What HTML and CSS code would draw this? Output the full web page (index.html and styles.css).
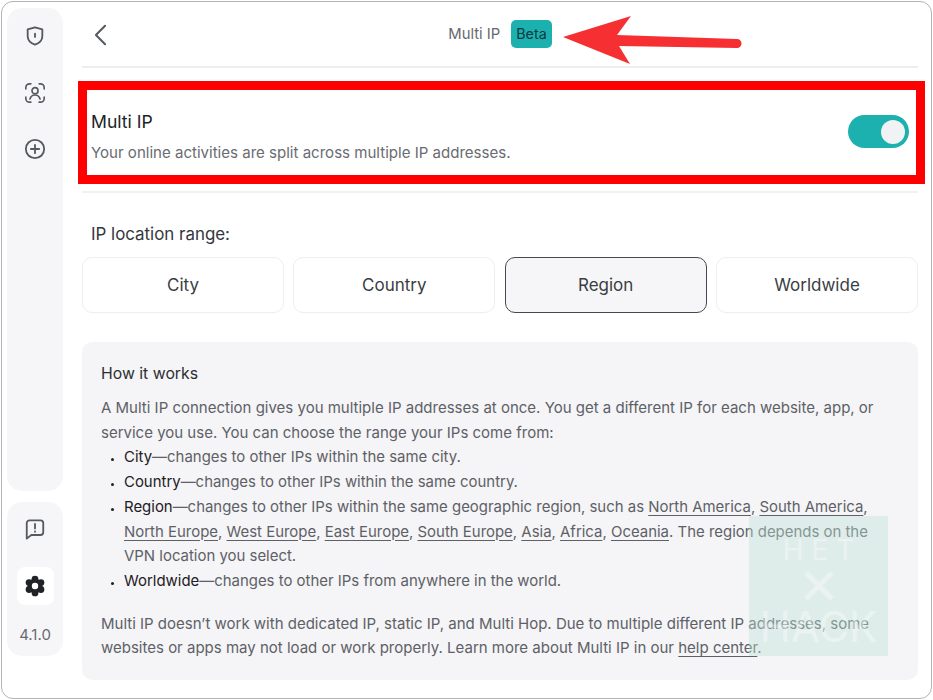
FILE: index.html
```html
<!DOCTYPE html>
<html lang="en">
<head>
  <meta charset="UTF-8">
  <title>Multi IP</title>
  <link rel="stylesheet" href="styles.css">
</head>
<body>
  <div class="window">
    <aside class="sidebar">
      <div class="side-panel side-top">
        <svg class="side-icon" viewBox="0 0 24 24" fill="none" stroke="#555a60" stroke-width="2" stroke-linejoin="round" stroke-linecap="round">
          <path d="M12 2.500l8 2.400v7.200c0 4.600-3.400 7.800-8 9.400-4.600-1.600-8-4.800-8-9.400V4.900z"/>
          <path d="M12 9.500v3.500"/>
        </svg>
        <svg class="side-icon" viewBox="0 0 24 24" fill="none" stroke="#555a60" stroke-width="1.800" stroke-linecap="round">
          <path d="M2 7.500V6a4 4 0 0 1 4-4h1.500M16.500 2H18a4 4 0 0 1 4 4v1.500M22 16.500V18a4 4 0 0 1-4 4h-1.500M7.500 22H6a4 4 0 0 1-4-4v-1.500"/>
          <circle cx="12" cy="9.500" r="3.300"/>
          <path d="M6.500 18.500c.8-2.800 3-4.300 5.500-4.300s4.700 1.500 5.500 4.300"/>
        </svg>
        <svg class="side-icon" viewBox="0 0 24 24" fill="none" stroke="#555a60" stroke-width="2" stroke-linecap="round">
          <circle cx="12" cy="12" r="10"/>
          <path d="M12 7.500v9M7.500 12h9"/>
        </svg>
      </div>
      <div class="side-panel side-bottom">
        <svg class="side-icon" viewBox="0 0 24 24" fill="none" stroke="#555a60" stroke-width="2" stroke-linejoin="round" stroke-linecap="round">
          <path d="M3 5.500a3 3 0 0 1 3-3h12a3 3 0 0 1 3 3v10a3 3 0 0 1-3 3H8l-5 4z"/>
          <path d="M12 6.500v5M12 14.700v.3"/>
        </svg>
        <div class="settings-tile">
          <svg class="gear" viewBox="0 0 24 24">
            <g fill="#1f2327">
              <circle cx="12" cy="12" r="8"/>
              <circle cx="12" cy="4.500" r="3.700"/>
              <circle cx="12" cy="19.500" r="3.700"/>
              <circle cx="5.500" cy="8.200" r="3.700"/>
              <circle cx="18.500" cy="8.200" r="3.700"/>
              <circle cx="5.500" cy="15.800" r="3.700"/>
              <circle cx="18.500" cy="15.800" r="3.700"/>
            </g>
            <circle cx="12" cy="12" r="3.500" fill="#fff"/>
          </svg>
        </div>
        <span class="version">4.1.0</span>
      </div>
    </aside>

    <main class="main">
      <header class="topbar">
        <svg class="back" viewBox="0 0 14 24" fill="none" stroke="#555a60" stroke-width="2.200" stroke-linecap="round" stroke-linejoin="round">
          <path d="M12 2L2 12l10 10"/>
        </svg>
        <div class="title">
          <span>Multi IP</span>
          <span class="beta">Beta</span>
        </div>
      </header>

      <section class="toggle-row">
        <div>
          <h2 class="toggle-title">Multi IP</h2>
          <p class="toggle-desc">Your online activities are split across multiple IP addresses.</p>
        </div>
        <div class="switch"><span class="knob"></span></div>
      </section>

      <div class="range">
        <h3 class="range-label">IP location range:</h3>
        <div class="range-options">
          <div class="option">City</div>
          <div class="option">Country</div>
          <div class="option selected">Region</div>
          <div class="option">Worldwide</div>
        </div>
      </div>

      <section class="info">
        <h3 class="info-title">How it works</h3>
        <p>A Multi IP connection gives you multiple IP addresses at once. You get a different IP for each website, app, or service you use. You can choose the range your IPs come from:</p>
        <ul>
          <li><b>City</b>—changes to other IPs within the same city.</li>
          <li><b>Country</b>—changes to other IPs within the same country.</li>
          <li><b>Region</b>—changes to other IPs within the same geographic region, such as <a>North America</a>, <a>South America</a>, <a>North Europe</a>, <a>West Europe</a>, <a>East Europe</a>, <a>South Europe</a>, <a>Asia</a>, <a>Africa</a>, <a>Oceania</a>. The region depends on the VPN location you select.</li>
          <li><b>Worldwide</b>—changes to other IPs from anywhere in the world.</li>
        </ul>
        <p class="note">Multi IP doesn’t work with dedicated IP, static IP, and Multi Hop. Due to multiple different IP addresses, some websites or apps may not load or work properly. Learn more about Multi IP in our <a>help center</a>.</p>
      </section>
    </main>

    <!-- annotations on top of the screenshot -->
    <svg class="arrow" viewBox="0 0 180 50">
      <path fill="#f62f33" d="M1 22L69 1 55 20 175 24a4 4 0 0 1 0 9L57 31 68 49z"/>
    </svg>
    <div class="watermark">
      <span class="wm-top">НЕТ</span>
      <span class="wm-cross">✕</span>
      <span class="wm-bottom">HACK</span>
    </div>
  </div>
</body>
</html>
```

FILE: styles.css
```css
* {
  box-sizing: border-box;
}

html, body {
  margin: 0;
  height: 100%;
  background: #fff;
}

body {
  font-family: Inter, "Liberation Sans", sans-serif;
  color: #5d6166;
}

.window {
  position: relative;
  width: 931px;
  height: 698px;
  margin: 1px 0 0 1px;
  border: 1px solid #b4b4b6;
  border-radius: 12px;
  display: flex;
  background: #fff;
  overflow: hidden;
}

.sidebar {
  width: 80px;
  flex: none;
  padding: 6px 19px 42px 5px;
  display: flex;
  flex-direction: column;
  gap: 11px;
}

.side-panel {
  background: #f6f6f8;
  border-radius: 15px;
  display: flex;
  flex-direction: column;
  align-items: center;
}

.side-top {
  flex: 1;
  padding-top: 17px;
  gap: 34.500px;
}

.side-bottom {
  height: 154px;
  padding-top: 16px;
}

.side-icon {
  width: 22px;
  height: 22px;
}

.settings-tile {
  width: 37px;
  height: 38px;
  margin-top: 27px;
  background: #fff;
  border-radius: 8px;
  display: flex;
  align-items: center;
  justify-content: center;
}

.gear {
  width: 22px;
  height: 22px;
}

.version {
  margin-top: 20px;
  font-size: 15px;
  line-height: 20px;
  color: #666a6f;
}

.main {
  width: 836px;
  flex: none;
}

.topbar {
  position: relative;
  height: 66px;
  border-bottom: 2px solid #eeeef1;
  display: flex;
  align-items: center;
  justify-content: center;
}

.back {
  position: absolute;
  left: 12px;
  top: 22px;
  width: 13px;
  height: 22px;
}

.title {
  display: flex;
  align-items: center;
  gap: 11px;
  font-size: 14.800px;
  color: #66696e;
}

.beta {
  background: #1cb1ae;
  color: #0f3a42;
  font-size: 14.300px;
  line-height: 28px;
  padding: 0 5px;
  border-radius: 5px;
}

.toggle-row {
  margin: 13px -7px 0 -4px;
  height: 103px;
  border: 9px solid #fe0000;
  padding: 7px 7px 0 4px;
  display: flex;
  align-items: center;
  justify-content: space-between;
}

.toggle-title {
  margin: 0 0 9px;
  font-size: 17.600px;
  font-weight: 400;
  line-height: 24px;
  color: #202327;
}

.toggle-desc {
  margin: 0;
  font-size: 15.050px;
  line-height: 20px;
  color: #696c71;
}

.switch {
  width: 61px;
  height: 33px;
  margin-top: -9px;
  border-radius: 17px;
  background: #1cb1ae;
  display: flex;
  align-items: center;
  justify-content: flex-end;
  padding-right: 4px;
}

.knob {
  width: 24px;
  height: 24px;
  border-radius: 50%;
  background: #f1f2f3;
}

.range {
  margin-top: 7px;
  border-top: 2px solid #f1f1f3;
}

.range-label {
  margin: 29px 0 11px 9px;
  font-size: 16.900px;
  font-weight: 400;
  line-height: 24px;
  color: #34373b;
}

.range-options {
  display: grid;
  grid-template-columns: repeat(4, 1fr);
  gap: 9.300px;
}

.option {
  height: 56px;
  border: 1px solid #eeeef1;
  border-radius: 10px;
  display: flex;
  align-items: center;
  justify-content: center;
  font-size: 17px;
  color: #3a3d41;
}

.option.selected {
  background: #f6f6f8;
  border: 1.500px solid #45494e;
}

.info {
  margin-top: 29px;
  height: 338px;
  padding: 20px 19px 0;
  background: #f5f4f7;
  border-radius: 10px;
  font-size: 15px;
  line-height: 24.700px;
}

.info-title {
  margin: 0 0 10px;
  font-size: 15.800px;
  font-weight: 400;
  line-height: 24px;
  color: #2c2f33;
}

.info p {
  margin: 0;
}

.info ul {
  margin: 0;
  padding-left: 23px;
  font-size: 14.950px;
}

.info li::marker {
  font-size: 10px;
  color: #222;
}

.info b {
  font-weight: 400;
  color: #1d2024;
}

.info a {
  text-decoration: underline;
  text-underline-offset: 3px;
}

.info .note {
  margin-top: 18px;
}

.arrow {
  position: absolute;
  left: 560px;
  top: 13px;
  width: 180px;
  height: 50px;
}

.watermark {
  position: absolute;
  left: 747px;
  top: 514px;
  width: 139px;
  height: 140px;
  background: rgba(190, 228, 214, 0.4);
  display: flex;
  flex-direction: column;
  align-items: center;
  padding-top: 20px;
  color: rgba(255, 255, 255, 0.35);
}

.wm-top {
  font-size: 28px;
  line-height: 28px;
  letter-spacing: 8px;
  margin-right: -8px;
}

.wm-cross {
  margin-top: 2px;
  font-size: 50px;
  line-height: 40px;
}

.wm-bottom {
  font-size: 42px;
  line-height: 42px;
}
```
